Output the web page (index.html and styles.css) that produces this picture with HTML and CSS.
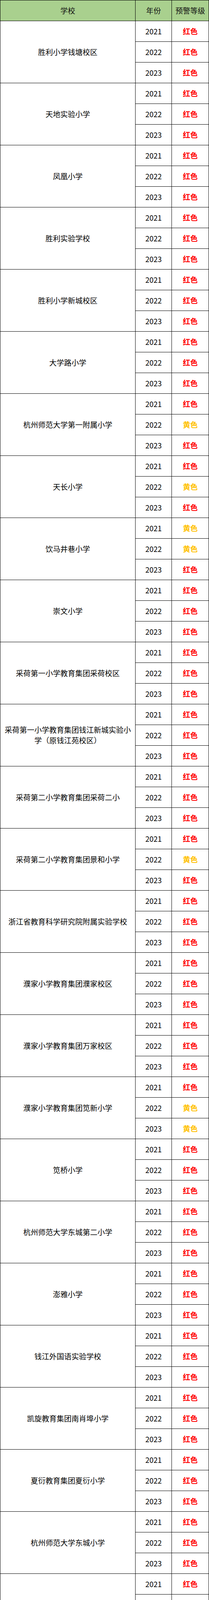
FILE: index.html
```html
<!DOCTYPE html>
<html lang="zh-CN">
<head>
<meta charset="utf-8">
<title>预警等级</title>
<link rel="stylesheet" href="styles.css">
</head>
<body>
<div class="sheet">
  <div class="cell head">学校</div><div class="cell head">年份</div><div class="cell head">预警等级</div>

  <div class="cell school">胜利小学钱塘校区</div>
  <div class="cell year">2021</div><div class="cell lv red">红色</div>
  <div class="cell year">2022</div><div class="cell lv red">红色</div>
  <div class="cell year">2023</div><div class="cell lv red">红色</div>

  <div class="cell school">天地实验小学</div>
  <div class="cell year">2021</div><div class="cell lv red">红色</div>
  <div class="cell year">2022</div><div class="cell lv red">红色</div>
  <div class="cell year">2023</div><div class="cell lv red">红色</div>

  <div class="cell school">凤凰小学</div>
  <div class="cell year">2021</div><div class="cell lv red">红色</div>
  <div class="cell year">2022</div><div class="cell lv red">红色</div>
  <div class="cell year">2023</div><div class="cell lv red">红色</div>

  <div class="cell school">胜利实验学校</div>
  <div class="cell year">2021</div><div class="cell lv red">红色</div>
  <div class="cell year">2022</div><div class="cell lv red">红色</div>
  <div class="cell year">2023</div><div class="cell lv red">红色</div>

  <div class="cell school">胜利小学新城校区</div>
  <div class="cell year">2021</div><div class="cell lv red">红色</div>
  <div class="cell year">2022</div><div class="cell lv red">红色</div>
  <div class="cell year">2023</div><div class="cell lv red">红色</div>

  <div class="cell school">大学路小学</div>
  <div class="cell year">2021</div><div class="cell lv red">红色</div>
  <div class="cell year">2022</div><div class="cell lv red">红色</div>
  <div class="cell year">2023</div><div class="cell lv red">红色</div>

  <div class="cell school">杭州师范大学第一附属小学</div>
  <div class="cell year">2021</div><div class="cell lv red">红色</div>
  <div class="cell year">2022</div><div class="cell lv yellow">黄色</div>
  <div class="cell year">2023</div><div class="cell lv red">红色</div>

  <div class="cell school">天长小学</div>
  <div class="cell year">2021</div><div class="cell lv red">红色</div>
  <div class="cell year">2022</div><div class="cell lv yellow">黄色</div>
  <div class="cell year">2023</div><div class="cell lv red">红色</div>

  <div class="cell school">饮马井巷小学</div>
  <div class="cell year">2021</div><div class="cell lv yellow">黄色</div>
  <div class="cell year">2022</div><div class="cell lv yellow">黄色</div>
  <div class="cell year">2023</div><div class="cell lv red">红色</div>

  <div class="cell school">崇文小学</div>
  <div class="cell year">2021</div><div class="cell lv red">红色</div>
  <div class="cell year">2022</div><div class="cell lv red">红色</div>
  <div class="cell year">2023</div><div class="cell lv red">红色</div>

  <div class="cell school">采荷第一小学教育集团采荷校区</div>
  <div class="cell year">2021</div><div class="cell lv red">红色</div>
  <div class="cell year">2022</div><div class="cell lv red">红色</div>
  <div class="cell year">2023</div><div class="cell lv red">红色</div>

  <div class="cell school">采荷第一小学教育集团钱江新城实验小学（原钱江苑校区）</div>
  <div class="cell year">2021</div><div class="cell lv red">红色</div>
  <div class="cell year">2022</div><div class="cell lv red">红色</div>
  <div class="cell year">2023</div><div class="cell lv red">红色</div>

  <div class="cell school">采荷第二小学教育集团采荷二小</div>
  <div class="cell year">2021</div><div class="cell lv red">红色</div>
  <div class="cell year">2022</div><div class="cell lv red">红色</div>
  <div class="cell year">2023</div><div class="cell lv red">红色</div>

  <div class="cell school">采荷第二小学教育集团景和小学</div>
  <div class="cell year">2021</div><div class="cell lv red">红色</div>
  <div class="cell year">2022</div><div class="cell lv yellow">黄色</div>
  <div class="cell year">2023</div><div class="cell lv red">红色</div>

  <div class="cell school">浙江省教育科学研究院附属实验学校</div>
  <div class="cell year">2021</div><div class="cell lv red">红色</div>
  <div class="cell year">2022</div><div class="cell lv red">红色</div>
  <div class="cell year">2023</div><div class="cell lv red">红色</div>

  <div class="cell school">濮家小学教育集团濮家校区</div>
  <div class="cell year">2021</div><div class="cell lv red">红色</div>
  <div class="cell year">2022</div><div class="cell lv red">红色</div>
  <div class="cell year">2023</div><div class="cell lv red">红色</div>

  <div class="cell school">濮家小学教育集团万家校区</div>
  <div class="cell year">2021</div><div class="cell lv red">红色</div>
  <div class="cell year">2022</div><div class="cell lv red">红色</div>
  <div class="cell year">2023</div><div class="cell lv red">红色</div>

  <div class="cell school">濮家小学教育集团笕新小学</div>
  <div class="cell year">2021</div><div class="cell lv red">红色</div>
  <div class="cell year">2022</div><div class="cell lv yellow">黄色</div>
  <div class="cell year">2023</div><div class="cell lv yellow">黄色</div>

  <div class="cell school">笕桥小学</div>
  <div class="cell year">2021</div><div class="cell lv red">红色</div>
  <div class="cell year">2022</div><div class="cell lv red">红色</div>
  <div class="cell year">2023</div><div class="cell lv red">红色</div>

  <div class="cell school">杭州师范大学东城第二小学</div>
  <div class="cell year">2021</div><div class="cell lv red">红色</div>
  <div class="cell year">2022</div><div class="cell lv red">红色</div>
  <div class="cell year">2023</div><div class="cell lv red">红色</div>

  <div class="cell school">澎雅小学</div>
  <div class="cell year">2021</div><div class="cell lv red">红色</div>
  <div class="cell year">2022</div><div class="cell lv red">红色</div>
  <div class="cell year">2023</div><div class="cell lv red">红色</div>

  <div class="cell school">钱江外国语实验学校</div>
  <div class="cell year">2021</div><div class="cell lv red">红色</div>
  <div class="cell year">2022</div><div class="cell lv red">红色</div>
  <div class="cell year">2023</div><div class="cell lv red">红色</div>

  <div class="cell school">凯旋教育集团南肖埠小学</div>
  <div class="cell year">2021</div><div class="cell lv red">红色</div>
  <div class="cell year">2022</div><div class="cell lv red">红色</div>
  <div class="cell year">2023</div><div class="cell lv red">红色</div>

  <div class="cell school">夏衍教育集团夏衍小学</div>
  <div class="cell year">2021</div><div class="cell lv red">红色</div>
  <div class="cell year">2022</div><div class="cell lv red">红色</div>
  <div class="cell year">2023</div><div class="cell lv red">红色</div>

  <div class="cell school">杭州师范大学东城小学</div>
  <div class="cell year">2021</div><div class="cell lv red">红色</div>
  <div class="cell year">2022</div><div class="cell lv red">红色</div>
  <div class="cell year">2023</div><div class="cell lv red">红色</div>

  <div class="cell school">丁蕙第二小学</div>
  <div class="cell year">2021</div><div class="cell lv red">红色</div>
  <div class="cell year">2022</div><div class="cell lv red">红色</div>
  <div class="cell year">2023</div><div class="cell lv red">红色</div>

  <div class="cell school">采荷第三小学教育集团采荷三小</div>
  <div class="cell year">2021</div><div class="cell lv red">红色</div>
  <div class="cell year">2022</div><div class="cell lv none">——</div>
  <div class="cell year">2023</div><div class="cell lv yellow">黄色</div>

  <div class="cell school">凯旋教育集团春芽实验学校</div>
  <div class="cell year">2021</div><div class="cell lv yellow">黄色</div>
  <div class="cell year">2022</div><div class="cell lv yellow">黄色</div>
  <div class="cell year">2023</div><div class="cell lv red">红色</div>

  <div class="cell school">澎博小学</div>
  <div class="cell year">2021</div><div class="cell lv yellow">黄色</div>
  <div class="cell year">2022</div><div class="cell lv red">红色</div>
  <div class="cell year">2023</div><div class="cell lv red">红色</div>

  <div class="cell school">杭州师范大学东城实验学校</div>
  <div class="cell year">2021</div><div class="cell lv yellow">黄色</div>
  <div class="cell year">2022</div><div class="cell lv yellow">黄色</div>
  <div class="cell year">2023</div><div class="cell lv red">红色</div>

  <div class="cell school">采实教育集团澎致小学</div>
  <div class="cell year">2021</div><div class="cell lv yellow">黄色</div>
  <div class="cell year">2022</div><div class="cell lv none">——</div>
  <div class="cell year">2023</div><div class="cell lv none">——</div>
</div>
</body>
</html>
```

FILE: styles.css
```css
html, body {
  margin: 0;
  padding: 0;
  background: #ffffff;
}

body {
  font-family: "Noto Sans CJK SC", "Microsoft YaHei", sans-serif;
  font-size: 19px;
  color: #000000;
}

.sheet {
  display: grid;
  grid-template-columns: 346px 93px 95px;
  grid-auto-rows: 53px;
  width: 535px;
  box-sizing: border-box;
  border-top: 1px solid #000;
  border-left: 1px solid #000;
}

.cell {
  box-sizing: border-box;
  border-right: 1px solid #000;
  border-bottom: 1px solid #000;
  display: flex;
  align-items: center;
  justify-content: center;
  text-align: center;
  line-height: 1.4;
  padding: 0 8px;
}

.head {
  background: #a9d08e;
  color: #111;
  padding: 0;
}

.school {
  grid-column: 1;
  grid-row: span 3;
}

.year {
  grid-column: 2;
  padding: 0;
}

.lv {
  grid-column: 3;
  padding: 0;
  font-weight: bold;
}

.red {
  color: #ff0000;
}

.yellow {
  color: #ffc000;
}

.none {
  font-weight: normal;
  color: #000;
}
```
